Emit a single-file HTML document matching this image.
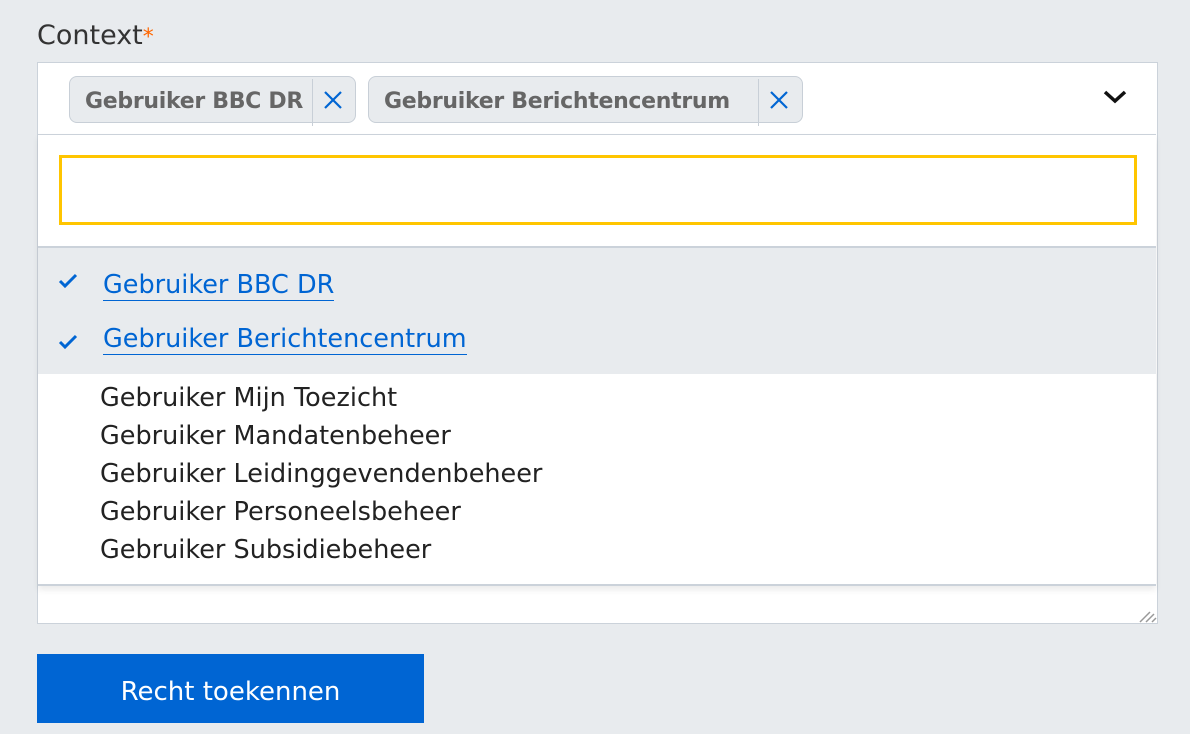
<!DOCTYPE html><html><head><style>
body{margin:0;width:1190px;height:734px;background:#e8ebee;font-family:"DejaVu Sans","Liberation Sans",sans-serif;position:relative;overflow:hidden}
.a{position:absolute}
.lbl{left:37px;top:20px;font-size:27px;color:#333}
.box{left:37px;top:62px;width:1119px;height:560px;background:#fff;border:1px solid #cbd2da}
.tag{top:76px;height:47px;background:#e8ebee;border:1px solid #c8cfd7;border-radius:8px;box-sizing:border-box}
.tag span{position:absolute;left:15px;top:1px;line-height:47px;font-size:22px;font-weight:bold;color:#666;white-space:nowrap;letter-spacing:-0.3px}
.tag i{position:absolute;top:2px;width:1px;height:47px;background:#c8cfd7}
.tag svg{position:absolute;top:13px}
.panel{left:38px;top:134px;width:1118px;height:449px;background:#fff;border-top:1px solid #cbd2da;border-bottom:2px solid #cbd2da;box-shadow:0 4px 6px rgba(0,0,0,.08)}
.sel{left:38px;top:246px;width:1118px;height:126px;background:#e8ebee;border-top:2px solid #cbd2da}
.it{left:100px;font-size:25.5px;color:#222}
.lk{left:103px;font-size:25.5px;color:#0065d3;border-bottom:1px solid #0065d3;line-height:30px}
</style></head><body>
<div class="a lbl">Context<span style="color:#f60;font-size:22px">*</span></div>
<div class="a box"></div>
<div class="a tag" style="left:69px;width:287px"><span>Gebruiker BBC DR</span><i style="left:242px"></i><svg style="left:253px" width="20" height="20"><path d="M2 2l16 16M18 2L2 18" stroke="#0065d3" stroke-width="2.2"/></svg></div>
<div class="a tag" style="left:368px;width:435px"><span>Gebruiker Berichtencentrum</span><i style="left:389px"></i><svg style="left:400px" width="20" height="20"><path d="M2 2l16 16M18 2L2 18" stroke="#0065d3" stroke-width="2.2"/></svg></div>
<svg class="a" style="left:1103px;top:89px" width="24" height="16"><path d="M2 3l10 9 10-9" stroke="#111" stroke-width="3.5" fill="none"/></svg>
<div class="a panel"></div>
<div class="a" style="left:59px;top:155px;width:1078px;height:70px;border:3px solid #ffc500;box-sizing:border-box;background:#fff"></div>
<div class="a sel"></div>
<svg class="a" style="left:58px;top:273px" width="20" height="16"><path d="M2 8l5 5 11-11" stroke="#0065d3" stroke-width="3" fill="none"/></svg>
<svg class="a" style="left:58px;top:334px" width="20" height="16"><path d="M2 8l5 5 11-11" stroke="#0065d3" stroke-width="3" fill="none"/></svg>
<div class="a lk" style="top:270px">Gebruiker BBC DR</div>
<div class="a lk" style="top:324px">Gebruiker Berichtencentrum</div>
<div class="a it" style="top:383px">Gebruiker Mijn Toezicht</div>
<div class="a it" style="top:421px">Gebruiker Mandatenbeheer</div>
<div class="a it" style="top:459px">Gebruiker Leidinggevendenbeheer</div>
<div class="a it" style="top:497px">Gebruiker Personeelsbeheer</div>
<div class="a it" style="top:535px">Gebruiker Subsidiebeheer</div>
<svg class="a" style="left:1137px;top:610px" width="20" height="13"><path d="M3 12l10-10M9 12l8-8M15 12l4-4" stroke="#999" stroke-width="1.5"/></svg>
<div class="a" style="left:37px;top:654px;width:387px;height:69px;background:#0065d3;color:#fff;font-size:26px;text-align:center;line-height:76px">Recht toekennen</div>
</body></html>
